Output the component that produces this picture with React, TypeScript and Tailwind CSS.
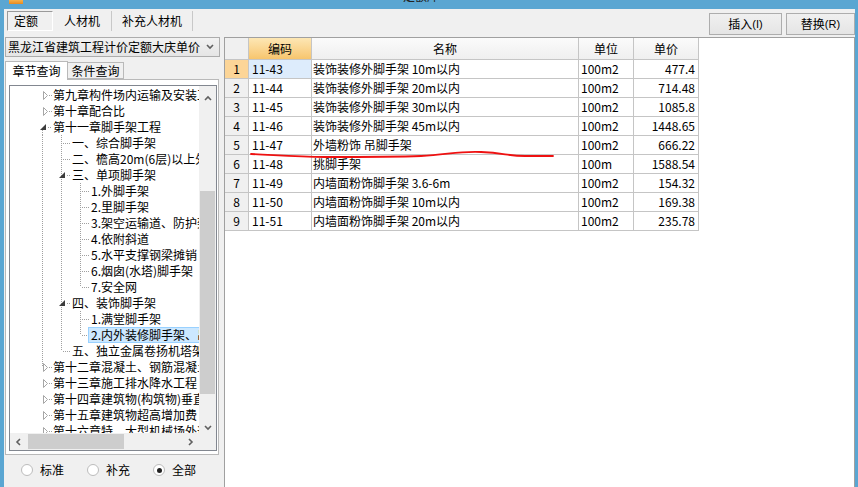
import React from 'react';

type Guide = 'n' | 'f' | 't' | 'b';

interface TreeRow {
  lv: number;
  text: string;
  exp?: 'open' | 'closed';
  g: Guide[];
  selected?: boolean;
}

const treeRows: TreeRow[] = [
  { lv: 0, text: '第九章构件场内运输及安装工程', exp: 'closed', g: ['n'] },
  { lv: 0, text: '第十章配合比', exp: 'closed', g: ['n'] },
  { lv: 0, text: '第十一章脚手架工程', exp: 'open', g: ['b'] },
  { lv: 1, text: '一、综合脚手架', g: ['f', 'f'] },
  { lv: 1, text: '二、檐高20m(6层)以上外脚手架', g: ['f', 'f'] },
  { lv: 1, text: '三、单项脚手架', exp: 'open', g: ['f', 'f'] },
  { lv: 2, text: '1.外脚手架', g: ['f', 'f', 'f'] },
  { lv: 2, text: '2.里脚手架', g: ['f', 'f', 'f'] },
  { lv: 2, text: '3.架空运输道、防护架', g: ['f', 'f', 'f'] },
  { lv: 2, text: '4.依附斜道', g: ['f', 'f', 'f'] },
  { lv: 2, text: '5.水平支撑钢梁摊销', g: ['f', 'f', 'f'] },
  { lv: 2, text: '6.烟囱(水塔)脚手架', g: ['f', 'f', 'f'] },
  { lv: 2, text: '7.安全网', g: ['f', 'f', 't'] },
  { lv: 1, text: '四、装饰脚手架', exp: 'open', g: ['f', 'f'] },
  { lv: 2, text: '1.满堂脚手架', g: ['f', 'f', 'f'] },
  { lv: 2, text: '2.内外装修脚手架、吊篮', g: ['f', 'f', 't'], selected: true },
  { lv: 1, text: '五、独立金属卷扬机塔架', g: ['f', 't'] },
  { lv: 0, text: '第十二章混凝土、钢筋混凝土及模板', exp: 'closed', g: ['t'] },
  { lv: 0, text: '第十三章施工排水降水工程', exp: 'closed', g: ['n'] },
  { lv: 0, text: '第十四章建筑物(构筑物)垂直运输', exp: 'closed', g: ['n'] },
  { lv: 0, text: '第十五章建筑物超高增加费', exp: 'closed', g: ['n'] },
  { lv: 0, text: '第十六章特、大型机械场外运输', exp: 'closed', g: ['n'] },
];

const gridRows = [
  ['11-43', '装饰装修外脚手架 10m以内', '100m2', '477.4'],
  ['11-44', '装饰装修外脚手架 20m以内', '100m2', '714.48'],
  ['11-45', '装饰装修外脚手架 30m以内', '100m2', '1085.8'],
  ['11-46', '装饰装修外脚手架 45m以内', '100m2', '1448.65'],
  ['11-47', '外墙粉饰 吊脚手架', '100m2', '666.22'],
  ['11-48', '挑脚手架', '100m', '1588.54'],
  ['11-49', '内墙面粉饰脚手架 3.6-6m', '100m2', '154.32'],
  ['11-50', '内墙面粉饰脚手架 10m以内', '100m2', '169.38'],
  ['11-51', '内墙面粉饰脚手架 20m以内', '100m2', '235.78'],
];

const DOT = '#a0a0a0';

function GuideCell({ kind, own, exp }: { kind: Guide; own: boolean; exp?: 'open' | 'closed' }) {
  const x = 9.5;
  return (
    <svg width="19" height="16" className="shrink-0" shapeRendering="crispEdges">
      {kind === 'f' && <line x1={x} y1={0} x2={x} y2={16} stroke={DOT} strokeDasharray="1 1" />}
      {kind === 't' && <line x1={x} y1={0} x2={x} y2={8} stroke={DOT} strokeDasharray="1 1" />}
      {kind === 'b' && <line x1={x} y1={9} x2={x} y2={16} stroke={DOT} strokeDasharray="1 1" />}
      {own && !exp && <line x1={x + 1} y1={8.5} x2={19} y2={8.5} stroke={DOT} strokeDasharray="1 1" />}
      {own && exp === 'closed' && (
        <>
          <path d="M10.5 4.5 L14.5 8.5 L10.5 12.5 Z" fill="#fff" stroke="#a6a6a6" shapeRendering="auto" />
          <line x1={16} y1={8.5} x2={19} y2={8.5} stroke={DOT} strokeDasharray="1 1" />
        </>
      )}
      {own && exp === 'open' && (
        <>
          <path d="M13 5 L13 11 L7 11 Z" fill="#3c3c3c" shapeRendering="auto" />
          <line x1={15} y1={8.5} x2={19} y2={8.5} stroke={DOT} strokeDasharray="1 1" />
        </>
      )}
    </svg>
  );
}

function TreeLine({ row }: { row: TreeRow }) {
  return (
    <div className="flex h-[16px] items-center whitespace-nowrap">
      {row.g.map((k, i) => (
        <GuideCell key={i} kind={k} own={i === row.lv} exp={i === row.lv ? row.exp : undefined} />
      ))}
      <span
        className={
          'ml-[-2px] h-[16px] pl-[2px] pr-[2px] leading-[14px] border ' +
          (row.selected ? 'bg-[#cce8ff] border-[#99d1ff]' : 'border-transparent')
        }
      >
        {row.text}
      </span>
    </div>
  );
}

function Chevron({ dir, className }: { dir: 'up' | 'down' | 'left' | 'right'; className?: string }) {
  const d = {
    up: 'M1 5 L4 2 L7 5',
    down: 'M1 2 L4 5 L7 2',
    left: 'M5 1 L2 4 L5 7',
    right: 'M2 1 L5 4 L2 7',
  }[dir];
  return (
    <svg width="8" height="8" className={className}>
      <path d={d} fill="none" stroke="#606060" strokeWidth="1.6" />
    </svg>
  );
}

function Radio({ label, checked }: { label: string; checked?: boolean }) {
  return (
    <div className="flex items-center">
      <span className="w-[12px] h-[12px] rounded-full border border-[#bcbcbc] bg-white flex items-center justify-center">
        {checked && <span className="w-[5px] h-[5px] rounded-full bg-[#222]" />}
      </span>
      <span className="ml-[7px] leading-[14px]">{label}</span>
    </div>
  );
}

function LeftPanel() {
  return (
    <div className="w-[215px] ml-[1px] flex flex-col">
      {/* library selector */}
      <div className="h-[20px] border border-[#acacac] bg-gradient-to-b from-[#f2f2f2] to-[#e5e5e5] flex items-center pl-[2px] pr-[5px]">
        <span className="flex-1 leading-[14px] whitespace-nowrap overflow-hidden">黑龙江省建筑工程计价定额大庆单价</span>
        <Chevron dir="down" />
      </div>

      {/* sub tabs */}
      <div className="h-[19px] mt-[3px] flex items-end">
        <div className="w-[63px] h-[19px] bg-white border border-b-0 border-[#b9b9b9] flex items-center justify-center leading-[14px] relative z-10 -mb-px">
          章节查询
        </div>
        <div className="w-[56px] h-[17px] bg-[#f0f0f0] border border-l-0 border-[#b9b9b9] flex items-center justify-center leading-[14px]">
          条件查询
        </div>
      </div>

      {/* tab page */}
      <div className="w-[214px] h-[376px] bg-white border border-[#b9b9b9] pt-[5px] pl-[3px]">
        <div className="w-[208px] h-[366px] border border-[#828790] flex flex-col bg-white">
          <div className="flex h-[347px]">
            <div className="w-[189px] overflow-hidden pt-px pl-[23px]">
              {treeRows.map((r, i) => (
                <TreeLine key={i} row={r} />
              ))}
            </div>
            <div className="w-[17px] bg-[#f0f0f0] flex flex-col items-center">
              <div className="h-[17px] flex items-center justify-center mt-[4px]">
                <Chevron dir="up" />
              </div>
              <div className="w-[15px] h-[203px] bg-[#cdcdcd] mt-[84px]" />
              <div className="flex-1" />
              <div className="h-[17px] flex items-center justify-center mb-[-3px]">
                <Chevron dir="down" />
              </div>
            </div>
          </div>
          <div className="flex h-[17px]">
            <div className="w-[189px] bg-[#f0f0f0] flex items-center">
              <div className="w-[17px] flex justify-center">
                <Chevron dir="left" />
              </div>
              <div className="w-[96px] h-[15px] bg-[#cdcdcd] ml-[1px]" />
              <div className="flex-1" />
              <div className="w-[17px] flex justify-center">
                <Chevron dir="right" />
              </div>
            </div>
            <div className="w-[17px] bg-[#f0f0f0]" />
          </div>
        </div>
      </div>

      {/* filter radios */}
      <div className="flex-1 flex items-center pl-[16px] gap-[23px] pb-[2px]">
        <Radio label="标准" />
        <Radio label="补充" />
        <Radio label="全部" checked />
      </div>
    </div>
  );
}

const colW = ['w-[24px]', 'w-[63px]', 'w-[267px]', 'w-[55px]', 'w-[65px]'];

function RightPanel() {
  return (
    <div className="w-[631px] border-l border-t border-r border-[#a0a0a0] bg-white relative">
      <div className="flex flex-col w-[474px]">
        <div className="flex h-[22px]">
          <div className={colW[0] + ' border-r border-b border-[#c5c5c5] bg-[#f0f0f0]'} />
          <div className={colW[1] + ' border-r border-b border-[#c5c5c5] bg-gradient-to-b from-[#fde7b4] to-[#f7c56d] flex items-center justify-center leading-[14px]'}>
            编码
          </div>
          {['名称', '单位', '单价'].map((h, i) => (
            <div
              key={h}
              className={colW[i + 2] + ' border-r border-b border-[#c5c5c5] bg-gradient-to-b from-[#fbfbfb] to-[#efefef] flex items-center justify-center leading-[14px]'}
            >
              {h}
            </div>
          ))}
        </div>
        {gridRows.map((r, i) => (
          <div key={i} className="flex h-[19px]">
            <div
              className={
                colW[0] +
                ' border-r border-b border-[#c5c5c5] flex items-center justify-center leading-[14px] ' +
                (i === 0 ? 'bg-[#fcd597]' : 'bg-[#f0f0f0]')
              }
            >
              {i + 1}
            </div>
            <div
              className={
                colW[1] +
                ' border-r border-b border-[#c5c5c5] flex items-center pl-[3px] leading-[14px] ' +
                (i === 0 ? 'bg-[#ddecfc]' : '')
              }
            >
              {r[0]}
            </div>
            <div className={colW[2] + ' border-r border-b border-[#c5c5c5] flex items-center pl-[1px] leading-[14px] whitespace-nowrap'}>
              {r[1]}
            </div>
            <div className={colW[3] + ' border-r border-b border-[#c5c5c5] flex items-center pl-[2px] leading-[14px]'}>
              {r[2]}
            </div>
            <div className={colW[4] + ' border-r border-b border-[#c5c5c5] flex items-center justify-end pr-[3px] leading-[14px]'}>
              {r[3]}
            </div>
          </div>
        ))}
      </div>

      {/* hand-drawn red mark over row 5 */}
      <svg className="absolute left-0 top-0 pointer-events-none" width="631" height="200">
        <path
          d="M26 116 C50 117 70 119 100 119 S170 119 196 118 S232 113 256 114 S282 118 300 118 L328 118"
          fill="none"
          stroke="#ee1111"
          strokeWidth="1.8"
          strokeLinecap="round"
        />
      </svg>
    </div>
  );
}

export default function App() {
  return (
    <div className="w-[858px] h-[487px] bg-[#5aa6d2] flex flex-col overflow-hidden font-['Noto_Sans_CJK_SC',sans-serif] text-[12px] text-black">
      {/* title bar, cut at the top */}
      <div className="h-[9px] flex overflow-hidden relative">
        <div className="w-[14px] h-[4px] ml-[9px] bg-gradient-to-b from-[#f6b24a] to-[#e88a1c]" />
        <div className="w-[380px]" />
        <span className="mt-[-11px] text-[#222] leading-[14px]">定额库</span>
      </div>

      <div className="flex-1 ml-[4px] mr-[3px] bg-[#f0f0f0] flex flex-col">
        {/* top tabs and buttons */}
        <div className="h-[28px] flex">
          <div className="flex mt-[2px] h-[20px] ml-[3px]">
            <div className="w-[46px] h-[20px] border border-t-[#9a9a9a] border-l-[#9a9a9a] border-r-white border-b-white bg-[#f0f0f0] flex items-center pl-[6px] leading-[14px]">
              定额
            </div>
            <div className="w-[59px] flex items-center justify-center border-r border-[#c8c8c8] leading-[14px]">人材机</div>
            <div className="w-[81px] flex items-center justify-center border-r border-[#c8c8c8] leading-[14px]">补充人材机</div>
          </div>
          <div className="flex-1" />
          <div className="flex mt-[4px] h-[22px] gap-[4px]">
            <button className="w-[73px] h-[22px] border border-[#adadad] bg-gradient-to-b from-[#f0f0f0] to-[#e5e5e5] flex items-center justify-center leading-[14px]">
              插入<span className="text-[11px] font-['Liberation_Sans',sans-serif]">(I)</span>
            </button>
            <button className="w-[69px] h-[22px] border border-[#adadad] bg-gradient-to-b from-[#f0f0f0] to-[#e5e5e5] flex items-center justify-center leading-[14px]">
              替换<span className="text-[11px] font-['Liberation_Sans',sans-serif]">(R)</span>
            </button>
          </div>
        </div>

        {/* panels */}
        <div className="flex-1 flex">
          <LeftPanel />
          <div className="w-[4px]" />
          <RightPanel />
        </div>
      </div>
    </div>
  );
}
